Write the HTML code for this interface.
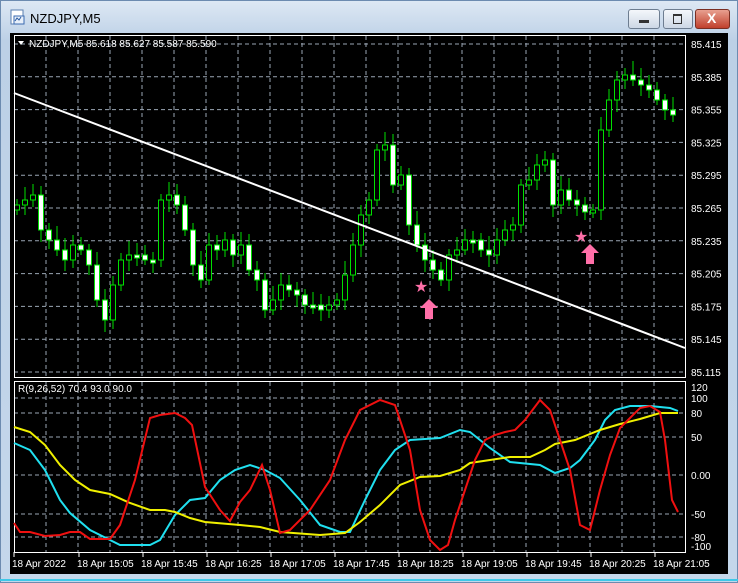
<!DOCTYPE html>
<html><head><meta charset="utf-8"><style>
html,body{margin:0;padding:0;width:738px;height:583px;overflow:hidden;background:#c9dbee;font-family:"Liberation Sans",sans-serif}
#frame{position:absolute;left:0;top:0;width:736px;height:581px;border:1px solid #6c8bb0;background:linear-gradient(#dde8f4,#bcd0e6 40px,#c4d7eb);}
#title{position:absolute;left:30px;top:11px;font-size:13px;color:#000}
.btn{position:absolute;top:9px;height:18px;border:1px solid #6d7d90;border-radius:3px;background:linear-gradient(#f4f7fb,#cdd8e5)}
#bx{background:linear-gradient(#e8a090,#c0402c);border-color:#7a2e22}
#black{position:absolute;left:10px;top:33px;width:718px;height:541px;background:#000}
#bot{position:absolute;left:0;top:579px;width:738px;height:2px;background:#3fc8e8}
svg text{font-family:"Liberation Sans",sans-serif;font-size:10px;fill:#fff}
</style></head><body>
<div id="frame"></div>
<svg style="position:absolute;left:10px;top:9px" width="16" height="17"><rect x="1" y="1" width="12" height="14" fill="#fff" stroke="#5a7fb0"/><rect x="4" y="7" width="10" height="8" fill="#e8f0fa" stroke="#3a6ab0"/><path d="M5 12 l2-3 2 2 2-3" stroke="#2a5aa0" fill="none"/></svg>
<div id="title">NZDJPY,M5</div>
<div class="btn" style="left:628px;width:30px"><div style="position:absolute;left:10px;top:10px;width:10px;height:3px;background:#333"></div></div>
<div class="btn" style="left:663px;width:28px"><div style="position:absolute;left:9px;top:4px;width:7px;height:7px;border:1px solid #333;border-top-width:2px"></div></div>
<div class="btn" id="bx" style="left:695px;width:33px"><div style="position:absolute;left:11px;top:0px;color:#fff;font-weight:bold;font-size:14px">X</div></div>
<div id="black"></div>
<div id="bot"></div>
<svg id="s" style="position:absolute;left:0;top:0" width="738" height="583"></svg>
<script>
var s=document.getElementById('s'),h='';
function L(a){h+=a;}
var gc='#9aa6b4';
var pl=['85.415','85.385','85.355','85.325','85.295','85.265','85.235','85.205','85.175','85.145','85.115'];
for(var i=0;i<11;i++){var y=44+i*32.8;L('<line x1="14" x2="685" y1="'+y+'" y2="'+y+'" stroke="'+gc+'" stroke-dasharray="4,3"/>');L('<text x="691" y="'+(y+4)+'">'+pl[i]+'</text>');}
for(var x=46;x<685;x+=32){L('<line x1="'+x+'" x2="'+x+'" y1="36" y2="377" stroke="'+gc+'" stroke-dasharray="4,3"/>');L('<line x1="'+x+'" x2="'+x+'" y1="382" y2="552" stroke="'+gc+'" stroke-dasharray="4,3"/>');}
var il=[[387,'120'],[398,'100'],[413,'80'],[437,'50'],[475,'0.00'],[514,'-50'],[537,'-80'],[546,'-100']];
il.forEach(function(a){if(a[1]!='120'&&a[1]!='-100')L('<line x1="14" x2="685" y1="'+a[0]+'" y2="'+a[0]+'" stroke="'+gc+'" stroke-dasharray="4,3"/>');L('<text x="691" y="'+(a[0]+4)+'">'+a[1]+'</text>');});
var ys=[205,200,195,230,240,250,260,245,250,265,300,320,285,260,255,255,260,260,200,195,205,230,265,280,245,250,240,255,245,270,280,310,300,285,290,295,305,305,310,305,300,275,245,215,200,150,145,185,175,225,245,260,270,280,255,250,240,240,250,255,240,230,225,185,180,165,160,205,190,200,205,212,210,130,100,80,75,80,85,90,100,110,115];
var prev=210;
for(var i=0;i<ys.length;i++){var x=17+i*8,o=prev,c=ys[i];var t=Math.min(o,c),b=Math.max(o,c);if(b-t<3){b=t+3;}
var wt=t-6-(i*7%9),wb=b+5+(i*5%8);
L('<line x1="'+x+'" x2="'+x+'" y1="'+wt+'" y2="'+wb+'" stroke="#00e000"/>');
L('<rect x="'+(x-2.5)+'" y="'+t+'" width="5" height="'+(b-t)+'" fill="'+(c<o?'#000':'#fff')+'" stroke="#00e000"/>');prev=c;}
L('<line x1="14" y1="93" x2="685" y2="348" stroke="#fff" stroke-width="2"/>');
function arr(x,y){L('<path d="M'+x+' '+y+' l9 9 h-5 v11 h-8 v-11 h-5z" fill="#ff6fa8"/>');}
function star(x,y){L('<text x="'+(x-7)+'" y="'+(y+6)+'" style="font-size:16px;fill:#ff6fa8">★</text>');}
star(421,286);arr(429,299);star(581,236);arr(590,244);
L('<rect x="14.5" y="35.5" width="671" height="342" fill="none" stroke="#fff"/>');
L('<rect x="14.5" y="381.5" width="671" height="171" fill="none" stroke="#fff"/>');
L('<text x="29" y="47">NZDJPY,M5  85.618 85.627 85.587 85.590</text><path d="M18 41 h6 l-3 4z" fill="#fff"/>');
L('<text x="18" y="392">R(9,26,52) 70.4 93.0 90.0</text>');
var tl=[[12,'18 Apr 2022'],[77,'18 Apr 15:05'],[141,'18 Apr 15:45'],[205,'18 Apr 16:25'],[269,'18 Apr 17:05'],[333,'18 Apr 17:45'],[397,'18 Apr 18:25'],[461,'18 Apr 19:05'],[525,'18 Apr 19:45'],[589,'18 Apr 20:25'],[653,'18 Apr 21:05']];
tl.forEach(function(a){L('<text x="'+a[0]+'" y="567">'+a[1]+'</text>');L('<line x1="'+(a[0]+2)+'" x2="'+(a[0]+2)+'" y1="552" y2="557" stroke="#fff"/>');});
function pl2(p,c){L('<polyline points="'+p+'" fill="none" stroke="'+c+'" stroke-width="2"/>');}
pl2('14,443 30,450 45,470 60,500 70,513 90,530 110,540 120,545 150,545 160,540 175,515 190,500 205,498 220,480 235,470 250,465 265,470 280,478 300,500 320,525 340,532 350,532 365,500 380,470 395,450 410,440 440,438 460,430 470,432 490,448 510,462 540,465 555,473 570,468 580,460 595,440 605,420 615,410 630,406 650,406 670,408 678,411','#20e0f0');
pl2('14,427 30,432 45,445 60,465 75,480 90,490 110,494 130,503 150,510 165,510 175,512 190,518 205,522 240,525 260,527 280,532 320,535 345,533 360,522 380,505 400,485 420,477 440,476 460,470 470,463 490,460 510,457 530,457 545,450 555,444 575,440 600,430 620,424 640,419 660,413 678,413','#f0f000');
pl2('14,523 20,532 30,532 45,536 60,535 70,532 80,532 90,539 110,539 120,525 135,480 150,418 160,415 175,413 185,418 192,425 205,487 220,510 230,521 240,502 250,490 262,465 270,490 280,533 290,530 310,510 330,480 345,440 360,410 380,400 395,405 410,450 420,510 430,540 440,550 448,545 455,520 465,490 475,460 485,440 495,435 505,432 515,430 525,420 540,400 550,410 560,440 570,470 580,525 590,530 600,490 610,455 620,428 630,418 640,408 650,406 660,412 665,440 672,500 678,512','#f01010');
s.innerHTML=h;
</script>
</body></html>
